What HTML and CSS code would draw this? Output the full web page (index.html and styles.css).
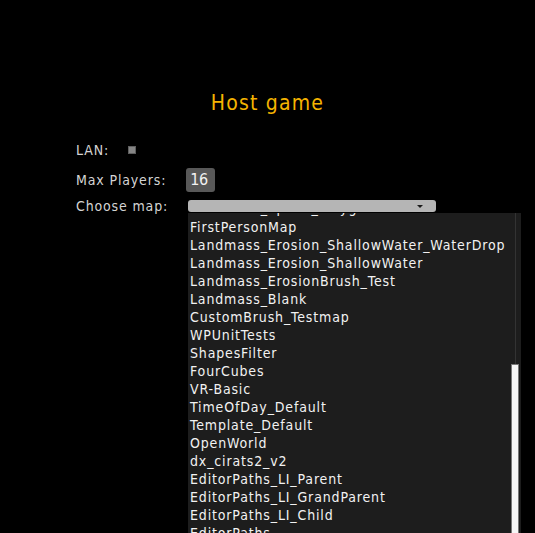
FILE: index.html
```html
<!DOCTYPE html>
<html>
<head>
<meta charset="utf-8">
<link rel="stylesheet" href="styles.css">
</head>
<body>
<div class="page">
  <h1 class="title">Host game</h1>
  <div class="form">
    <div class="row row-lan">
      <span class="label">LAN:</span>
      <span class="checkbox"></span>
    </div>
    <div class="row row-players">
      <span class="label">Max Players:</span>
      <span class="number">16</span>
    </div>
    <div class="row row-map">
      <span class="label label-map">Choose map:</span>
      <div class="dropdown">
        <div class="select"><span class="arrow"></span></div>
        <div class="popup">
          <ul class="options">
            <li class="clipped">Landmass_Spline_Playground</li>
            <li>FirstPersonMap</li>
            <li>Landmass_Erosion_ShallowWater_WaterDrop</li>
            <li>Landmass_Erosion_ShallowWater</li>
            <li>Landmass_ErosionBrush_Test</li>
            <li>Landmass_Blank</li>
            <li>CustomBrush_Testmap</li>
            <li>WPUnitTests</li>
            <li>ShapesFilter</li>
            <li>FourCubes</li>
            <li>VR-Basic</li>
            <li>TimeOfDay_Default</li>
            <li>Template_Default</li>
            <li>OpenWorld</li>
            <li>dx_cirats2_v2</li>
            <li>EditorPaths_LI_Parent</li>
            <li>EditorPaths_LI_GrandParent</li>
            <li>EditorPaths_LI_Child</li>
            <li>EditorPaths</li>
            <li>EditorPaths_Old</li>
          </ul>
          <div class="scrollbar"><div class="thumb"></div></div>
        </div>
      </div>
    </div>
  </div>
</div>
</body>
</html>
```

FILE: styles.css
```css
html, body {
  margin: 0;
  padding: 0;
  background: #000;
  height: 533px;
  overflow: hidden;
}
body {
  font-family: "DejaVu Sans Condensed", "DejaVu Sans", sans-serif;
  font-stretch: condensed;
  font-size: 14px;
  letter-spacing: 0.85px;
}
.page {
  padding-top: 91px;
}
.title {
  margin: 0;
  font-size: 21px;
  line-height: 24px;
  font-weight: normal;
  letter-spacing: 1.2px;
  text-align: center;
  color: #f5b400;
}
.form {
  margin: 25px 0 0 76px;
  display: flex;
  flex-direction: column;
  gap: 8px;
}
.row {
  display: flex;
  align-items: center;
}
.label {
  color: #d4d4d4;
  line-height: 20px;
}
.row-lan {
  height: 20px;
}
.checkbox {
  margin-left: 19px;
  width: 6px;
  height: 6px;
  background: #858585;
  border: 1px solid #5e5e5e;
}
.row-players {
  height: 24px;
}
.number {
  margin-left: 20px;
  width: 25px;
  height: 24px;
  padding-left: 4px;
  box-sizing: content-box;
  background: #585858;
  border-radius: 3px;
  color: #f2f2f2;
  font-size: 16px;
  letter-spacing: -0.5px;
  line-height: 24px;
}
.row-map {
  align-items: flex-start;
}
.label-map {
  width: 112px;
  line-height: 12px;
}
.dropdown {
  display: flex;
  flex-direction: column;
  gap: 1px;
}
.select {
  width: 248px;
  height: 12px;
  background: #b5b5b5;
  border-radius: 3px;
  display: flex;
  align-items: center;
  justify-content: flex-end;
  padding-right: 13px;
  box-sizing: border-box;
}
.arrow {
  width: 0;
  height: 0;
  border-left: 3px solid transparent;
  border-right: 3px solid transparent;
  border-top: 3px solid #1a1a1a;
}
.popup {
  width: 333px;
  height: 330px;
  background: #1d1d1d;
  display: flex;
  overflow: hidden;
}
.options {
  list-style: none;
  margin: -14px 0 0 0;
  padding: 0 0 0 2px;
  flex: 1;
  color: #f2f2f2;
  line-height: 18px;
  white-space: nowrap;
}
.options .clipped {
  padding-bottom: 1px;
}
.scrollbar {
  width: 10px;
  background: linear-gradient(to right, transparent 4px, #333 4px, #333 5px, transparent 5px);
  display: flex;
  flex-direction: column;
}
.thumb {
  margin-top: 151px;
  width: 6px;
  flex: 1;
  background: #f6f6f6;
  border: 1px solid #777;
}
```
